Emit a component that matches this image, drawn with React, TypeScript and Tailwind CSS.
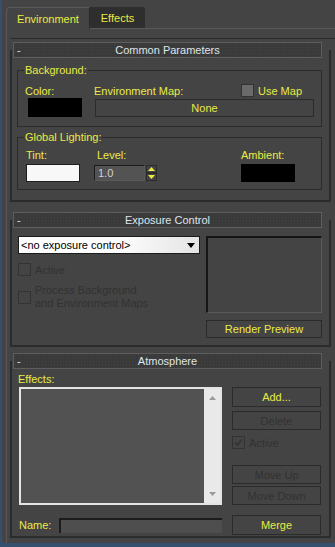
import type { ReactNode } from 'react';

const Rollout = ({ title, className, bodyClass, children }: { title: string; className?: string; bodyClass?: string; children: ReactNode }) => (
  <div className={className}>
    <div className="ml-[3px] grid h-[16px] w-[309px] grid-cols-[16px_1fr_16px] items-center border border-[#5e5e5e] bg-[#3a3a3a] bg-[radial-gradient(#444_1px,transparent_1px)] bg-[size:3px_3px] text-[#dfe5ec]">
      <span className="pl-[3px]">-</span>
      <span className="text-center">{title}</span>
      <span />
    </div>
    <div className={`-mt-[8px] w-[321px] border-x-2 border-b-2 border-[#2b2b2b] pt-[8px] ${bodyClass ?? ''}`}>{children}</div>
  </div>
);

const Group = ({ label, className, children }: { label: string; className?: string; children: ReactNode }) => (
  <fieldset className={`w-[305px] border border-[#2b2b2b] ${className ?? ''}`}>
    <legend className="ml-[6px] px-[1px] text-[#ebeb46]">{label}</legend>
    {children}
  </fieldset>
);

const Box = ({ mode }: { mode: 'on' | 'off' | 'checked' }) => {
  if (mode === 'on') return <span className="h-[13px] w-[13px] shrink-0 border border-[#333] bg-[#6a6a6a]" />;
  return (
    <span className="flex h-[13px] w-[13px] shrink-0 items-center justify-center border border-[#333]">
      {mode === 'checked' && (
        <svg width="9" height="9" viewBox="0 0 9 9">
          <path d="M1 4.5 L3.5 7 L8 1.5" fill="none" stroke="#333" strokeWidth="1.6" />
        </svg>
      )}
    </span>
  );
};

const Btn = ({ label, disabled, className }: { label: string; disabled?: boolean; className?: string }) => (
  <div className={`flex items-center justify-center border border-[#2b2b2b] ${disabled ? 'text-[#323232]' : 'text-[#ebeb46]'} ${className ?? ''}`}>{label}</div>
);

export default function App() {
  return (
    <div className="flex h-[547px] w-[335px] flex-col overflow-hidden border-b-4 border-l-2 border-[#35506f] bg-[#444] font-['Liberation_Sans',Arial,sans-serif] text-[11px] leading-[12px] text-[#ebeb46]">
      {/* tabs */}
      <div className="relative z-10 ml-[4px] mt-[7px] flex h-[21px] items-stretch">
        <div className="-mb-[1px] flex w-[84px] items-center justify-center rounded-tl-[4px] border-l border-t border-r border-[#5a5a5a] border-r-[#2b2b2b] bg-[#444]">Environment</div>
        <div className="flex w-[55px] items-center justify-center rounded-tr-[3px] bg-[#2e2e2e]">Effects</div>
      </div>

      <div className="ml-[4px] flex flex-1 flex-col border-l border-t border-[#5a5a5a] pl-[3px] pt-[9px]">
        <div className="flex-1 border-t border-[#2b2b2b]">
          {/* Common Parameters */}
          <Rollout title="Common Parameters" className="mt-[3px]" bodyClass="pb-[10px] pl-[5px]">
            <Group label="Background:" className="mt-[6px] pb-[9px]">
              <div className="mt-[8px] flex h-[13px] items-center pl-[7px]">
                <span className="w-[69px]">Color:</span>
                <span className="w-[147px]">Environment Map:</span>
                <Box mode="on" />
                <span className="ml-[4px]">Use Map</span>
              </div>
              <div className="mt-[1px] flex items-start pl-[10px]">
                <span className="h-[19px] w-[54px] bg-black" />
                <Btn label="None" className="ml-[13px] mt-[1px] h-[18px] w-[219px]" />
              </div>
            </Group>
            <Group label="Global Lighting:" className="mt-[4px] pb-[7px]">
              <div className="mt-[6px] flex h-[12px] items-center pl-[8px]">
                <span className="w-[71px]">Tint:</span>
                <span className="w-[144px]">Level:</span>
                <span>Ambient:</span>
              </div>
              <div className="mt-[3px] flex items-start pl-[8px]">
                <span className="h-[18px] w-[54px] border border-[#1e1e1e] bg-[#f8f8f8]" />
                <div className="ml-[14px] mt-[1px] flex h-[16px] w-[51px] items-center border border-[#1c1c1c] border-b-[#5a5a5a] border-r-[#5a5a5a] bg-[#535353] pl-[3px] text-[#d2d2d2]">1.0</div>
                <div className="ml-[1px] mt-[1px] flex h-[16px] w-[11px] flex-col">
                  <span className="flex h-[8px] items-center justify-center border border-[#2b2b2b]">
                    <svg width="7" height="4" viewBox="0 0 7 4"><path d="M0 4 L3.5 0 L7 4Z" fill="#ebeb46" /></svg>
                  </span>
                  <span className="flex h-[8px] items-center justify-center border border-[#2b2b2b]">
                    <svg width="7" height="4" viewBox="0 0 7 4"><path d="M0 0 L3.5 4 L7 0Z" fill="#ebeb46" /></svg>
                  </span>
                </div>
                <span className="ml-[84px] h-[18px] w-[54px] bg-black" />
              </div>
            </Group>
          </Rollout>

          {/* Exposure Control */}
          <Rollout title="Exposure Control" className="mt-[10px]" bodyClass="pb-[7px]">
            <div className="flex pl-[6px]">
              <div className="w-[182px]">
                <div className="mt-[8px] flex h-[18px] items-center justify-between border border-[#1c1c1c] bg-[linear-gradient(90deg,#fdfdfd_55%,#e4e4e4)] pl-[2px] pr-[4px] text-black">
                  <span>&lt;no exposure control&gt;</span>
                  <svg width="8" height="5" viewBox="0 0 8 5"><path d="M0 0 L8 0 L4 5Z" fill="#000" /></svg>
                </div>
                <div className="mt-[9px] flex items-center text-[#323232]">
                  <Box mode="off" />
                  <span className="ml-[4px]">Active</span>
                </div>
                <div className="mt-[8px] flex items-center text-[#323232]">
                  <Box mode="off" />
                  <span className="ml-[4px] leading-[13px]">Process Background<br />and Environment Maps</span>
                </div>
              </div>
              <div className="ml-[6px] w-[116px]">
                <div className="mt-[8px] h-[77px] border-l-2 border-t-2 border-[#151515] border-b border-r border-b-[#5a5a5a] border-r-[#5a5a5a]" />
                <Btn label="Render Preview" className="mt-[7px] h-[18px]" />
              </div>
            </div>
          </Rollout>

          {/* Atmosphere */}
          <Rollout title="Atmosphere" className="mt-[6px]" bodyClass="pb-[1px]">
            <div className="flex pl-[6px]">
              <div className="w-[204px]">
                <div className="mt-[4px]">Effects:</div>
                <div className="ml-[1px] mt-[2px] flex h-[118px] border-2 border-[#e4e4e4] bg-[#525252]">
                  <div className="flex-1" />
                  <div className="flex w-[16px] flex-col items-center justify-between bg-[#e9e9e9] py-[7px]">
                    <svg width="7" height="4" viewBox="0 0 7 4"><path d="M0 4 L3.5 0 L7 4Z" fill="#9a9a9a" /></svg>
                    <svg width="7" height="4" viewBox="0 0 7 4"><path d="M0 0 L3.5 4 L7 0Z" fill="#9a9a9a" /></svg>
                  </div>
                </div>
              </div>
              <div className="ml-[10px] w-[89px] pt-[18px]">
                <Btn label="Add..." className="h-[20px]" />
                <Btn label="Delete" disabled className="mt-[4px] h-[19px]" />
                <div className="mt-[6px] flex items-center text-[#323232]">
                  <Box mode="checked" />
                  <span className="ml-[4px]">Active</span>
                </div>
                <Btn label="Move Up" disabled className="mt-[16px] h-[19px]" />
                <Btn label="Move Down" disabled className="mt-[2px] h-[19px]" />
              </div>
            </div>
            <div className="mt-[10px] flex items-center pl-[7px]">
              <span className="w-[40px]">Name:</span>
              <span className="h-[15px] w-[163px] border-l-2 border-t-2 border-[#1c1c1c] bg-[#4e4e4e]" />
              <Btn label="Merge" className="ml-[10px] h-[20px] w-[89px]" />
            </div>
          </Rollout>
        </div>
      </div>
    </div>
  );
}
